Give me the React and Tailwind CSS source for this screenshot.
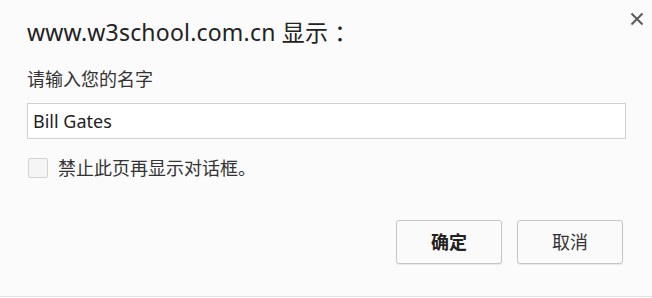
import React from 'react';

const font = { fontFamily: '"Microsoft YaHei", "Noto Sans", "Noto Sans CJK SC", sans-serif' };

const App = () => {
  return (
    <div className="w-[652px] h-[298px] bg-[#fbfbfb] flex flex-col overflow-hidden" style={font}>
      <div className="flex-1 flex flex-col pl-[27px] pr-[26px] pt-[17px]">
        <div className="flex items-start justify-between">
          <h1 className="text-[23px] leading-[30px] text-[#222] font-normal tracking-[0.2px]">www.w3school.com.cn 显示 ：</h1>
          <button className="mt-[-6px] mr-[-18px] w-[15px] h-[15px] flex items-center justify-center text-[#5a5a5a]">
            <svg width="14" height="14" viewBox="0 0 14 14">
              <path d="M1.5 1.5 L12.5 12.5 M12.5 1.5 L1.5 12.5" stroke="currentColor" strokeWidth="2" />
            </svg>
          </button>
        </div>
        <div className="mt-[20px] text-[18px] leading-[24px] text-[#333]">请输入您的名字</div>
        <input
          className="mt-[12px] w-[599px] h-[36px] border border-[#d0d0d0] bg-white px-[5px] text-[18px] text-[#222] outline-none"
          style={font}
          defaultValue="Bill Gates"
        />
        <label className="mt-[17px] h-[24px] flex items-center gap-[10px] text-[18px] leading-[24px] text-[#333]">
          <span className="w-[20px] h-[20px] ml-[1px] border border-[#d4d4d4] bg-[#f5f5f5] rounded-[2px]" />
          禁止此页再显示对话框。
        </label>
        <div className="mt-[40px] flex justify-end gap-[15px] pr-[3px]">
          <button className="w-[106px] h-[44px] border border-[#c6c6c6] rounded-[3px] bg-[#fafafa] text-[18px] font-bold text-[#222] shadow-[0_1px_1px_rgba(0,0,0,0.08)]">
            确定
          </button>
          <button className="w-[106px] h-[44px] border border-[#c6c6c6] rounded-[3px] bg-[#fafafa] text-[18px] text-[#333] shadow-[0_1px_1px_rgba(0,0,0,0.08)]">
            取消
          </button>
        </div>
      </div>
      <div className="h-[2px] border-t border-[#e2e2e2] bg-white" />
    </div>
  );
};

export default App;
